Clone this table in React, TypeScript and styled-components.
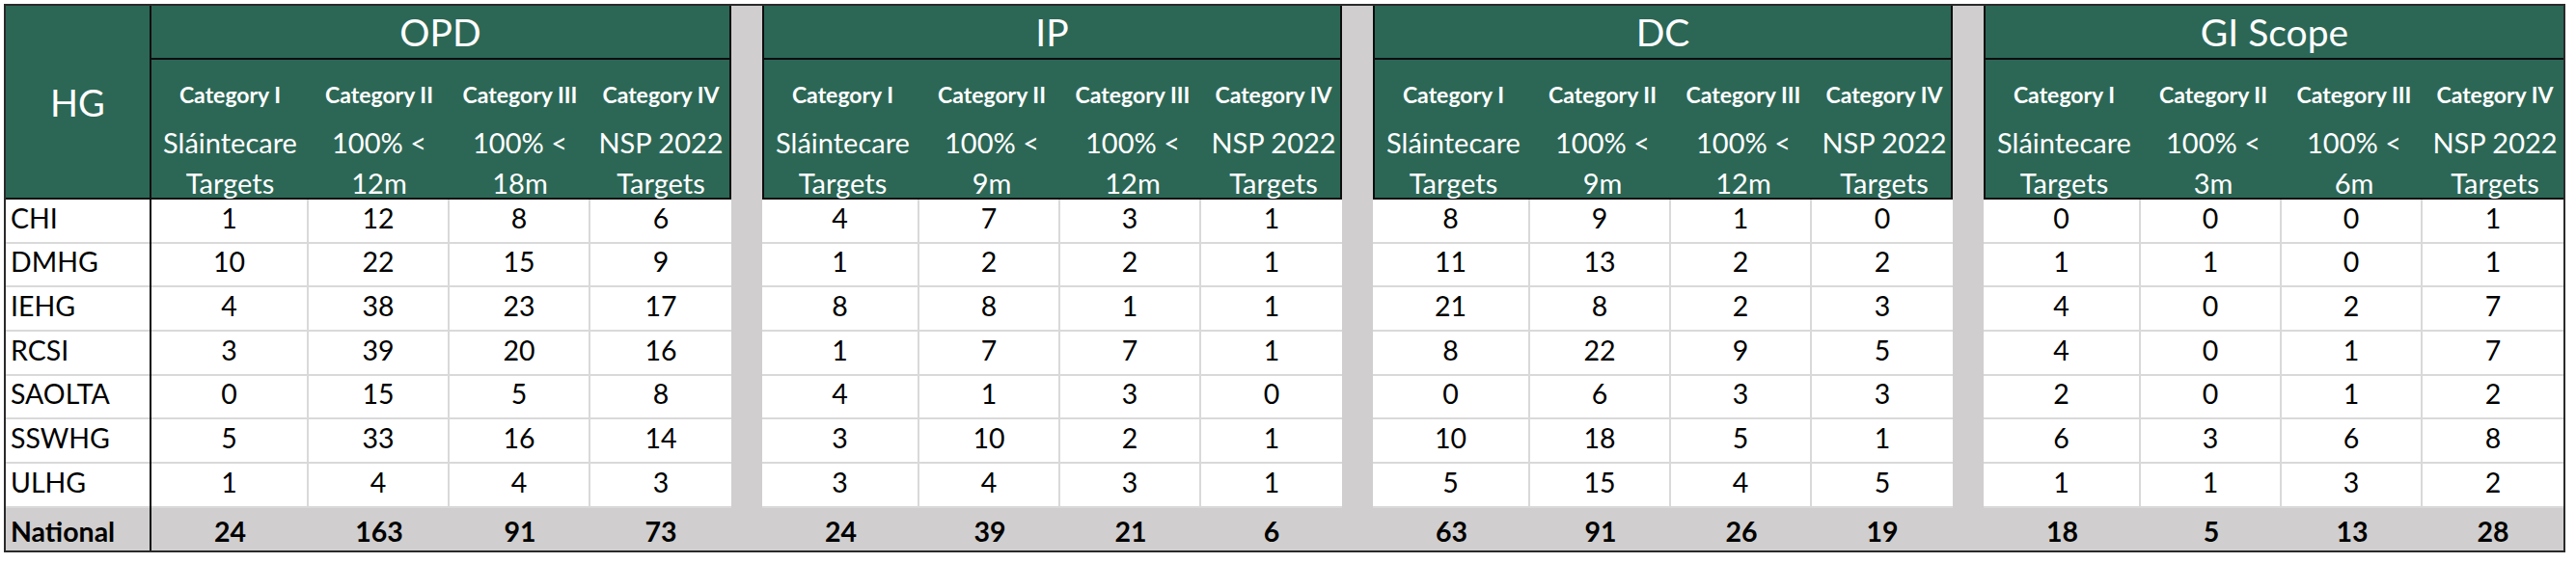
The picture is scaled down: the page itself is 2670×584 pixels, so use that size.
import React from "react";
import styled, { createGlobalStyle } from "styled-components";

const GREEN = "#2c6756";
const GRAY = "#d0cece";
const GRID = "#d9d9d9";
const INK = "#0d0d0d";
const FONT = `Lato, "Liberation Sans", sans-serif`;

const ROW_HEIGHTS = [46, 45, 46, 46, 45, 46, 46];
const NAMES = ["CHI", "DMHG", "IEHG", "RCSI", "SAOLTA", "SSWHG", "ULHG"];
const COLS = "163px 146px 146px 146px";

type Sub = { cat: string; l1: string; l2: string };
type GroupData = { title: string; subs: Sub[]; rows: number[][]; total: number[] };

const subs = (a: string, b: string): Sub[] => [
  { cat: "Category I", l1: "Sláintecare", l2: "Targets" },
  { cat: "Category II", l1: "100% <", l2: a },
  { cat: "Category III", l1: "100% <", l2: b },
  { cat: "Category IV", l1: "NSP 2022", l2: "Targets" },
];

const GROUPS: GroupData[] = [
  {
    title: "OPD",
    subs: subs("12m", "18m"),
    rows: [
      [1, 12, 8, 6],
      [10, 22, 15, 9],
      [4, 38, 23, 17],
      [3, 39, 20, 16],
      [0, 15, 5, 8],
      [5, 33, 16, 14],
      [1, 4, 4, 3],
    ],
    total: [24, 163, 91, 73],
  },
  {
    title: "IP",
    subs: subs("9m", "12m"),
    rows: [
      [4, 7, 3, 1],
      [1, 2, 2, 1],
      [8, 8, 1, 1],
      [1, 7, 7, 1],
      [4, 1, 3, 0],
      [3, 10, 2, 1],
      [3, 4, 3, 1],
    ],
    total: [24, 39, 21, 6],
  },
  {
    title: "DC",
    subs: subs("9m", "12m"),
    rows: [
      [8, 9, 1, 0],
      [11, 13, 2, 2],
      [21, 8, 2, 3],
      [8, 22, 9, 5],
      [0, 6, 3, 3],
      [10, 18, 5, 1],
      [5, 15, 4, 5],
    ],
    total: [63, 91, 26, 19],
  },
  {
    title: "GI Scope",
    subs: subs("3m", "6m"),
    rows: [
      [0, 0, 0, 1],
      [1, 1, 0, 1],
      [4, 0, 2, 7],
      [4, 0, 1, 7],
      [2, 0, 1, 2],
      [6, 3, 6, 8],
      [1, 1, 3, 2],
    ],
    total: [18, 5, 13, 28],
  },
];

const GlobalStyle = createGlobalStyle`
  html, body { margin: 0; padding: 0; background: #ffffff; }
  body { font-family: ${FONT}; color: #000; }
  * { box-sizing: border-box; }
`;

const Page = styled.div`
  padding: 4px 0 0 4px;
`;

const Sheet = styled.div`
  display: flex;
  width: max-content;
  border: 2px solid #2a2a2a;
  background: #fff;
`;

const HGColumn = styled.div`
  display: flex;
  flex-direction: column;
  width: 151px;
  border-right: 2px solid ${INK};
`;

const HGHeader = styled.div`
  height: 201px;
  background: ${GREEN};
  color: #fff;
  font-size: 38px;
  display: flex;
  align-items: center;
  justify-content: center;
  border-bottom: 2px solid ${INK};
`;

const NameCell = styled.div<{ $h: number }>`
  height: ${(p) => p.$h}px;
  display: flex;
  align-items: center;
  padding: 0 0 6px 5px;
  font-size: 28.5px;
  line-height: 1;
  border-bottom: 2px solid ${GRID};
`;

const NationalName = styled.div`
  height: 44px;
  display: flex;
  align-items: center;
  padding: 5px 0 0 5px;
  font-size: 28.5px;
  font-weight: 700;
  line-height: 1;
  background: ${GRAY};
`;

const GroupBlock = styled.div`
  display: flex;
  flex-direction: column;
  width: 601px;
`;

const GroupTitle = styled.div<{ $left: boolean; $right: boolean }>`
  height: 56px;
  background: ${GREEN};
  color: #fff;
  font-size: 39px;
  display: flex;
  align-items: center;
  justify-content: center;
  border-bottom: 2px solid ${INK};
  border-left: ${(p) => (p.$left ? `2px solid ${INK}` : "none")};
  border-right: ${(p) => (p.$right ? `2px solid ${INK}` : "none")};
`;

const SubHeader = styled.div<{ $left: boolean; $right: boolean }>`
  height: 145px;
  display: grid;
  grid-template-columns: ${COLS};
  background: ${GREEN};
  color: #fff;
  border-bottom: 2px solid ${INK};
  border-left: ${(p) => (p.$left ? `2px solid ${INK}` : "none")};
  border-right: ${(p) => (p.$right ? `2px solid ${INK}` : "none")};
`;

const SubCell = styled.div`
  display: flex;
  flex-direction: column;
  align-items: center;
  padding-top: 11px;
  white-space: nowrap;
`;

const CatLine = styled.div`
  font-size: 23px;
  font-weight: 700;
  line-height: 50px;
`;

const DescLine = styled.div<{ $lh: number }>`
  font-size: 29px;
  line-height: ${(p) => p.$lh}px;
`;

const BodyRow = styled.div<{ $h: number }>`
  height: ${(p) => p.$h}px;
  display: grid;
  grid-template-columns: ${COLS};
  border-bottom: 2px solid ${GRID};
`;

const NumCell = styled.div<{ $bold?: boolean }>`
  display: flex;
  align-items: center;
  justify-content: center;
  padding-bottom: 6px;
  font-size: 28.5px;
  font-weight: ${(p) => (p.$bold ? 700 : 400)};
  line-height: 1;
  border-right: 2px solid ${GRID};
  &:last-child {
    border-right: none;
  }
`;

const NationalRow = styled.div`
  height: 44px;
  display: grid;
  grid-template-columns: ${COLS};
  background: ${GRAY};
  & > div {
    border-right: none;
    padding-bottom: 0;
    padding-top: 5px;
  }
`;

const Gap = styled.div`
  width: 32px;
  background: ${GRAY};
`;

const Group: React.FC<{ g: GroupData; first: boolean; last: boolean }> = ({ g, first, last }) => (
  <GroupBlock>
    <GroupTitle $left={!first} $right={!last}>
      {g.title}
    </GroupTitle>
    <SubHeader $left={!first} $right={!last}>
      {g.subs.map((s) => (
        <SubCell key={s.cat}>
          <CatLine>{s.cat}</CatLine>
          <DescLine $lh={50}>{s.l1}</DescLine>
          <DescLine $lh={34}>{s.l2}</DescLine>
        </SubCell>
      ))}
    </SubHeader>
    {g.rows.map((r, i) => (
      <BodyRow key={NAMES[i]} $h={ROW_HEIGHTS[i]}>
        {r.map((v, j) => (
          <NumCell key={j}>{v}</NumCell>
        ))}
      </BodyRow>
    ))}
    <NationalRow>
      {g.total.map((v, j) => (
        <NumCell key={j} $bold>
          {v}
        </NumCell>
      ))}
    </NationalRow>
  </GroupBlock>
);

export default function App() {
  return (
    <>
      <GlobalStyle />
      <Page>
        <Sheet>
          <HGColumn>
            <HGHeader>HG</HGHeader>
            {NAMES.map((n, i) => (
              <NameCell key={n} $h={ROW_HEIGHTS[i]}>
                {n}
              </NameCell>
            ))}
            <NationalName>National</NationalName>
          </HGColumn>
          {GROUPS.map((g, i) => (
            <React.Fragment key={g.title}>
              {i > 0 && <Gap />}
              <Group g={g} first={i === 0} last={i === GROUPS.length - 1} />
            </React.Fragment>
          ))}
        </Sheet>
      </Page>
    </>
  );
}
